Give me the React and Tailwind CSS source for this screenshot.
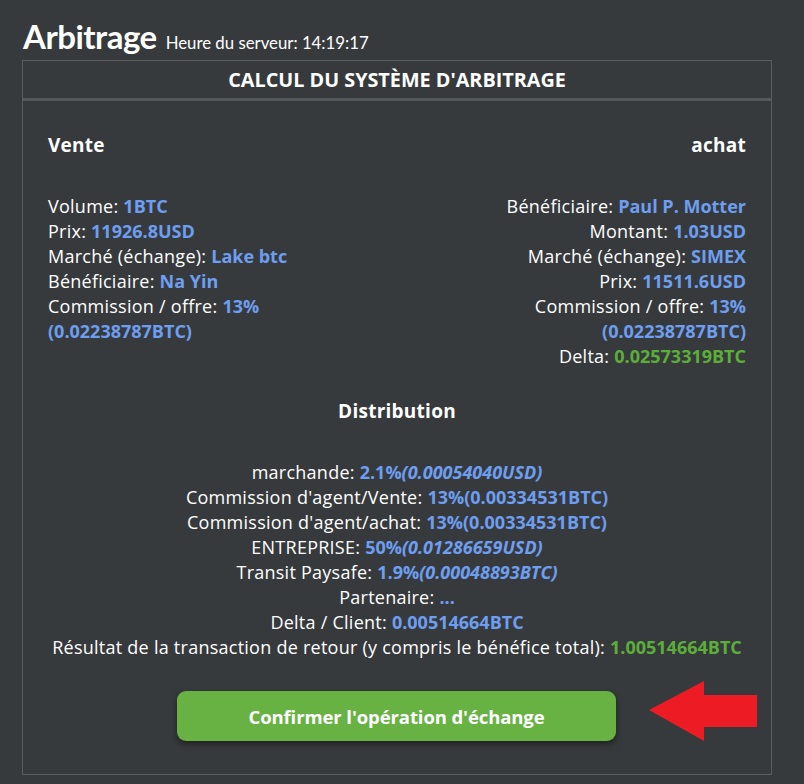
import React from 'react';

const V = ({ children, green }) => (
  <span className={`font-bold tracking-normal ${green ? 'text-[#5cae3a]' : 'text-[#6e9ef0]'}`}>{children}</span>
);

function Row({ label, children }) {
  return (
    <div>
      {label} {children}
    </div>
  );
}

function Arrow() {
  return (
    <svg width="110" height="62" viewBox="0 0 110 62" className="block">
      <polygon points="0,29 55,0 55,14 108,14 108,46 55,46 55,60" fill="#ed1c24" />
    </svg>
  );
}

export default function App() {
  return (
    <div className="min-h-[784px] w-full bg-[#373a3c] text-white font-['Open_Sans','Liberation_Sans',sans-serif] pt-[16px] pl-[22px] pr-[33px] pb-[11px]">
      <div className="flex items-baseline gap-[9px] h-[44px] pl-px">
        <h1 className="text-[33px] leading-[40px] font-bold tracking-[-0.5px] font-['Lato',sans-serif]">Arbitrage</h1>
        <span className="text-[16.8px] font-['Lato',sans-serif]">Heure du serveur: 14:19:17</span>
      </div>
      <div className="border border-[#5a5d5f] w-[750px]">
        <div className="h-[40px] flex items-center justify-center text-[19.8px] font-bold border-b-[3px] border-[#55585a]">
          CALCUL DU SYSTÈME D'ARBITRAGE
        </div>
        <div className="px-[25px] pt-[32px] text-[18px] leading-[25px] tracking-[0.25px]">
          <div className="flex justify-between">
            <div>
              <div className="text-[19px] font-bold mb-[36px]">Vente</div>
              <Row label="Volume:"><V>1BTC</V></Row>
              <Row label="Prix:"><V>11926.8USD</V></Row>
              <Row label="Marché (échange):"><V>Lake btc</V></Row>
              <Row label="Bénéficiaire:"><V>Na Yin</V></Row>
              <Row label="Commission / offre:"><V>13%</V></Row>
              <div><V>(0.02238787BTC)</V></div>
            </div>
            <div className="text-right">
              <div className="text-[19px] font-bold mb-[36px]">achat</div>
              <Row label="Bénéficiaire:"><V>Paul P. Motter</V></Row>
              <Row label="Montant:"><V>1.03USD</V></Row>
              <Row label="Marché (échange):"><V>SIMEX</V></Row>
              <Row label="Prix:"><V>11511.6USD</V></Row>
              <Row label="Commission / offre:"><V>13%</V></Row>
              <div><V>(0.02238787BTC)</V></div>
              <Row label="Delta:"><V green>0.02573319BTC</V></Row>
            </div>
          </div>
          <div className="text-center mt-[30px]">
            <div className="text-[19px] font-bold mb-[36px]">Distribution</div>
            <Row label="marchande:"><V>2.1%<i>(0.00054040USD)</i></V></Row>
            <Row label="Commission d'agent/Vente:"><V>13%(0.00334531BTC)</V></Row>
            <Row label="Commission d'agent/achat:"><V>13%(0.00334531BTC)</V></Row>
            <Row label="ENTREPRISE:"><V>50%<i>(0.01286659USD)</i></V></Row>
            <Row label="Transit Paysafe:"><V>1.9%<i>(0.00048893BTC)</i></V></Row>
            <Row label="Partenaire:"><V>...</V></Row>
            <Row label="Delta / Client:"><V>0.00514664BTC</V></Row>
            <Row label="Résultat de la transaction de retour (y compris le bénéfice total):"><V green>1.00514664BTC</V></Row>
          </div>
          <div className="flex items-center mt-[29px] pb-[31px] pl-[129px]">
            <button className="shrink-0 w-[439px] h-[50px] rounded-[9px] bg-[#67b243] text-white font-bold text-[18.5px] tracking-[-0.1px] shadow-[0_3px_6px_rgba(0,0,0,0.45)]">
              Confirmer l'opération d'échange
            </button>
            <div className="shrink-0 ml-[33px] -mt-[8px]">
              <Arrow />
            </div>
          </div>
        </div>
      </div>
    </div>
  );
}
